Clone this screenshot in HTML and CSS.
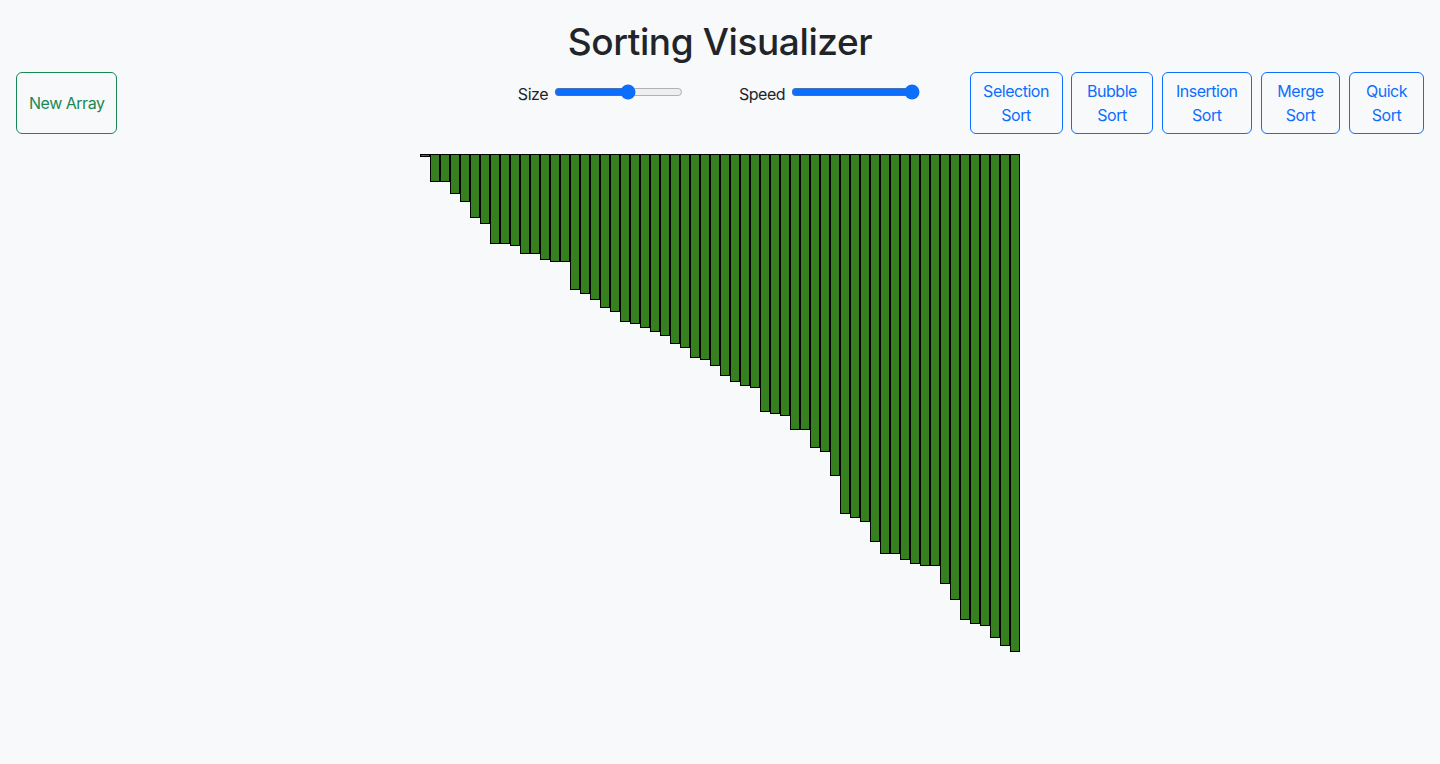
FILE: index.html
```html
<!DOCTYPE html>
<html lang="en">
<head>
<meta charset="utf-8">
<title>Sorting Visualizer</title>
<link rel="stylesheet" href="styles.css">
</head>
<body>
<div class="app">
  <h1 class="title">Sorting Visualizer</h1>
  <div class="controls">
    <div class="controls-left">
      <button class="btn btn-green">New Array</button>
    </div>
    <div class="sliders">
      <label class="slider-group">Size <input class="range" type="range" min="0" max="100" value="58"></label>
      <label class="slider-group">Speed <input class="range" type="range" min="0" max="100" value="100"></label>
    </div>
    <div class="sorts">
      <button class="btn btn-blue btn-selection">Selection Sort</button>
      <button class="btn btn-blue btn-bubble">Bubble Sort</button>
      <button class="btn btn-blue btn-insertion">Insertion Sort</button>
      <button class="btn btn-blue btn-merge">Merge Sort</button>
      <button class="btn btn-blue btn-quick">Quick Sort</button>
    </div>
  </div>
  <div class="bars">
    <div class="bar" style="height:3px"></div>
    <div class="bar" style="height:28px"></div>
    <div class="bar" style="height:28px"></div>
    <div class="bar" style="height:40px"></div>
    <div class="bar" style="height:48px"></div>
    <div class="bar" style="height:64px"></div>
    <div class="bar" style="height:70px"></div>
    <div class="bar" style="height:90px"></div>
    <div class="bar" style="height:90px"></div>
    <div class="bar" style="height:92px"></div>
    <div class="bar" style="height:100px"></div>
    <div class="bar" style="height:100px"></div>
    <div class="bar" style="height:106px"></div>
    <div class="bar" style="height:108px"></div>
    <div class="bar" style="height:108px"></div>
    <div class="bar" style="height:136px"></div>
    <div class="bar" style="height:140px"></div>
    <div class="bar" style="height:146px"></div>
    <div class="bar" style="height:154px"></div>
    <div class="bar" style="height:158px"></div>
    <div class="bar" style="height:168px"></div>
    <div class="bar" style="height:170px"></div>
    <div class="bar" style="height:174px"></div>
    <div class="bar" style="height:178px"></div>
    <div class="bar" style="height:182px"></div>
    <div class="bar" style="height:190px"></div>
    <div class="bar" style="height:194px"></div>
    <div class="bar" style="height:204px"></div>
    <div class="bar" style="height:206px"></div>
    <div class="bar" style="height:212px"></div>
    <div class="bar" style="height:222px"></div>
    <div class="bar" style="height:228px"></div>
    <div class="bar" style="height:232px"></div>
    <div class="bar" style="height:234px"></div>
    <div class="bar" style="height:258px"></div>
    <div class="bar" style="height:260px"></div>
    <div class="bar" style="height:262px"></div>
    <div class="bar" style="height:276px"></div>
    <div class="bar" style="height:276px"></div>
    <div class="bar" style="height:294px"></div>
    <div class="bar" style="height:298px"></div>
    <div class="bar" style="height:322px"></div>
    <div class="bar" style="height:360px"></div>
    <div class="bar" style="height:364px"></div>
    <div class="bar" style="height:368px"></div>
    <div class="bar" style="height:388px"></div>
    <div class="bar" style="height:400px"></div>
    <div class="bar" style="height:400px"></div>
    <div class="bar" style="height:406px"></div>
    <div class="bar" style="height:410px"></div>
    <div class="bar" style="height:412px"></div>
    <div class="bar" style="height:412px"></div>
    <div class="bar" style="height:430px"></div>
    <div class="bar" style="height:446px"></div>
    <div class="bar" style="height:466px"></div>
    <div class="bar" style="height:470px"></div>
    <div class="bar" style="height:472px"></div>
    <div class="bar" style="height:484px"></div>
    <div class="bar" style="height:492px"></div>
    <div class="bar" style="height:498px"></div>
  </div>
</div>
</body>
</html>
```

FILE: styles.css
```css
* {
  box-sizing: border-box;
}

html, body {
  margin: 0;
  padding: 0;
}

body {
  background: #f8f9fa;
  color: #212529;
  font-family: Inter, "Liberation Sans", sans-serif;
  font-size: 16px;
  line-height: 1.5;
  letter-spacing: -0.03em;
  height: 764px;
}

.app {
  padding: 16px 16px 0;
}

.title {
  margin: 0 0 6px;
  padding-top: 2px;
  font-size: 37px;
  font-weight: 500;
  line-height: 48px;
  letter-spacing: -0.4px;
  text-align: center;
  color: #212529;
}

.controls {
  display: grid;
  grid-template-columns: 1fr auto 1fr;
  align-items: stretch;
}

.controls-left {
  display: flex;
  justify-content: flex-start;
}

.sliders {
  display: flex;
  align-self: start;
  gap: 54px;
  padding-top: 10px;
  line-height: 24px;
}

.slider-group {
  white-space: nowrap;
}

.range {
  width: 129px;
  margin: 2px;
  accent-color: #0d6efd;
  vertical-align: baseline;
}

.sorts {
  display: flex;
  justify-content: flex-end;
  gap: 8.75px;
}

.btn {
  font-family: inherit;
  font-size: 16px;
  line-height: 24px;
  letter-spacing: -0.03em;
  padding: 6px 12px;
  border: 1px solid;
  border-radius: 6px;
  background: transparent;
  text-align: center;
  cursor: pointer;
}

.btn-green {
  color: #198754;
  border-color: #198754;
}

.btn-blue {
  color: #0d6efd;
  border-color: #0d6efd;
  padding: 6px 4px;
}

.btn-selection { width: 93px; }
.btn-bubble { width: 81.5px; }
.btn-insertion { width: 90.5px; }
.btn-merge { width: 79.5px; }
.btn-quick { width: 75px; }

.bars {
  display: flex;
  justify-content: center;
  align-items: flex-start;
  margin-top: 20px;
}

.bar {
  width: 10px;
  border: 1px solid #000;
  background: #37801f;
}
```
